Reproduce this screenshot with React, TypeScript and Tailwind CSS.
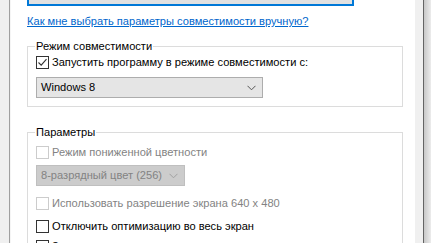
import React from "react";

const font = { fontFamily: '"Segoe UI", "Liberation Sans", Arial, sans-serif' };

function Check({ checked, disabled, label }: { checked?: boolean; disabled?: boolean; label: string }) {
  return (
    <div className="flex items-center h-[13px] gap-[3px]">
      <div
        className={
          "w-[13px] h-[13px] shrink-0 border flex items-center justify-center bg-white " +
          (disabled ? "border-[#cccccc]" : "border-[#333333]")
        }
      >
        {checked && (
          <svg width="11" height="11" viewBox="0 0 11 11">
            <path d="M1.5 5.5 L4.2 8.2 L9.5 2.2" fill="none" stroke="#333" strokeWidth="1.1" />
          </svg>
        )}
      </div>
      <span className={"text-[11.1px] leading-[15px] whitespace-nowrap " + (disabled ? "text-[#838383]" : "text-black")}>
        {label}
      </span>
    </div>
  );
}

function Select({ text, disabled, width }: { text: string; disabled?: boolean; width: string }) {
  return (
    <div
      className={
        "h-[21px] border flex items-center justify-between pl-[4px] pr-[6px] " +
        width +
        (disabled ? " bg-[#cccccc] border-[#bfbfbf] text-[#838383]" : " bg-[#e5e5e5] border-[#adadad] text-black")
      }
    >
      <span className="text-[11.1px] leading-[15px] whitespace-nowrap">{text}</span>
      <svg width="9" height="6" viewBox="0 0 9 6">
        <path d="M0.5 0.8 L4.5 4.8 L8.5 0.8" fill="none" stroke={disabled ? "#a0a0a0" : "#555"} strokeWidth="1" />
      </svg>
    </div>
  );
}

export default function App() {
  return (
    <div className="w-[431px] h-[243px] overflow-hidden flex bg-white" style={font}>
      <div className="w-[9px] shrink-0 bg-[#f0f0f0]" />
      <div className="w-[1px] shrink-0 bg-[#a0a0a0]" />
      <div className="w-[1px] shrink-0 bg-[#f5f5f5]" />
      <div className="flex-1 flex flex-col pl-[16px] pr-[12px]">
        <div className="mt-[-17px] w-[327px] h-[23px] shrink-0 border-2 border-[#0078d7] bg-[#e1e1e1] flex items-center justify-center">
          <span className="text-[11.1px] leading-[15px] whitespace-nowrap text-black">
            Запустить средство устранения проблем с совместимостью
          </span>
        </div>
        <a className="mt-[8px] text-[11.1px] leading-[15px] text-[#0066cc] underline whitespace-nowrap" href="#">
          Как мне выбрать параметры совместимости вручную?
        </a>
        <fieldset className="mt-[10px] border border-[#dcdcdc] h-[68px] px-[8px] shrink-0">
          <legend className="px-[1px] ml-[-1px] text-[11.1px] leading-[15px] text-black">Режим совместимости</legend>
          <div className="mt-[2px]">
            <Check checked label="Запустить программу в режиме совместимости с:" />
          </div>
          <div className="mt-[8px]">
            <Select text="Windows 8" width="w-[227px]" />
          </div>
        </fieldset>
        <fieldset className="mt-[18px] border border-[#dcdcdc] h-[140px] px-[8px] shrink-0">
          <legend className="px-[1px] ml-[-1px] text-[11.1px] leading-[15px] text-black">Параметры</legend>
          <div className="mt-[6px]">
            <Check disabled label="Режим пониженной цветности" />
          </div>
          <div className="mt-[6px]">
            <Select disabled text="8-разрядный цвет (256)" width="w-[149px]" />
          </div>
          <div className="mt-[11px]">
            <Check disabled label="Использовать разрешение экрана 640 x 480" />
          </div>
          <div className="mt-[10px]">
            <Check label="Отключить оптимизацию во весь экран" />
          </div>
          <div className="mt-[7px]">
            <Check label="Запускать эту программу от имени администратора" />
          </div>
        </fieldset>
      </div>
      <div className="w-[8px] shrink-0 bg-[#f0f0f0]" />
      <div className="w-[1px] shrink-0 bg-[#646464]" />
      <div className="w-[7px] shrink-0 bg-gradient-to-r from-[#c8c8c8] to-[#ececec]" />
    </div>
  );
}
